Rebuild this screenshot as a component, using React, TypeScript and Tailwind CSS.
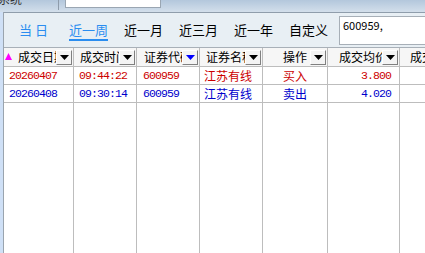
import React from "react";

const CJK = "font-['Noto_Sans_CJK_SC',sans-serif]";

const ranges = ["当 日", "近一周", "近一月", "近三月", "近一年", "自定义"];

type Col = { title: string; width: string; textPad: string; sort?: boolean; blue?: boolean };

const cols: Col[] = [
  { title: "成交日期", width: "w-[70px]", textPad: "pl-[14px]", sort: true },
  { title: "成交时间", width: "w-[63px]", textPad: "pl-[6px]" },
  { title: "证券代码", width: "w-[63px]", textPad: "pl-[7px]", blue: true },
  { title: "证券名称", width: "w-[63px]", textPad: "pl-[6px]" },
  { title: "操作", width: "w-[65px]", textPad: "pl-[20px]" },
  { title: "成交均价", width: "w-[72px]", textPad: "pl-[11px]" },
  { title: "成交金额", width: "w-[80px]", textPad: "pl-[10px]" },
];

const widths = cols.map((c) => c.width);

const rows = [
  { date: "20260407", time: "09:44:22", code: "600959", name: "江苏有线", side: "买入", price: "3.800", color: "text-[#cc0000]" },
  { date: "20260408", time: "09:30:14", code: "600959", name: "江苏有线", side: "卖出", price: "4.020", color: "text-[#0000cc]" },
];

const mono = "font-['Liberation_Mono',monospace] text-[11.5px] leading-[17px] tracking-[-0.9px]";

function DropButton({ blue }: { blue?: boolean }) {
  return (
    <span className="absolute right-[1px] top-[2px] flex h-[15px] w-[16px] items-center justify-center border border-t-white border-l-white border-r-[#808080] border-b-[#808080] bg-[#f4f4f4]">
      <svg width="9" height="5" viewBox="0 0 9 5">
        <polygon points="0,0 9,0 4.5,5" fill={blue ? "#0000ff" : "#000000"} />
      </svg>
    </span>
  );
}

export default function App() {
  return (
    <div className={`h-[253px] w-[425px] overflow-hidden bg-white ${CJK}`}>
      {/* window strip */}
      <div className="relative flex h-[12px] items-start overflow-hidden bg-gradient-to-b from-[#b3c7dc] to-[#d3dfeb]">
        <span className="mt-[-7px] ml-[-2px] shrink-0 text-[12px] leading-[12px] text-[#333]">系统</span>
        <span className="ml-[36px] h-[10px] w-px shrink-0 bg-[#8e9cab]" />
        <span className="ml-[6px] h-[8px] w-[96px] shrink-0 border border-t-0 border-[#9aa6b2] bg-white" />
      </div>

      <div className="flex h-[241px]">
        <div className="w-[3px] shrink-0 bg-[#cfe0f6]" />
        <div className="flex w-[422px] shrink-0 flex-col overflow-hidden border-l border-[#9aa4ae]">
          {/* range toolbar */}
          <div className="flex h-[36px] shrink-0 items-center overflow-hidden border-t border-b border-t-[#8f9dab] border-b-[#a8b0b8] bg-[#e8eff4] pl-[2px]">
            {ranges.map((r, i) => (
              <div key={r} className="flex w-[55px] shrink-0 justify-center">
                <span
                  className={`relative whitespace-pre text-[13px] leading-[14px] ${
                    i < 2 ? "text-[#2a8df0]" : "text-black"
                  }`}
                >
                  {r}
                  {i === 1 ? (
                    <span className="absolute left-0 right-0 top-[16px] h-[2px] bg-[#2a8df0]" />
                  ) : null}
                </span>
              </div>
            ))}
            <div className="ml-[3px] h-[29px] w-[100px] shrink-0 border border-[#a7afb7] bg-white px-[3px] pt-[2px] text-[11px] leading-[12px] text-black">
              600959,
            </div>
          </div>

          {/* grid */}
          <div className="flex flex-1 flex-col overflow-hidden">
            <div className="flex h-[19px] shrink-0 border-b border-[#bdbdbd] bg-[#f6f6f6]">
              {cols.map((c) => (
                <div
                  key={c.title}
                  className={`relative shrink-0 overflow-hidden border-r border-[#bdbdbd] ${c.width}`}
                >
                  {c.sort ? (
                    <svg className="absolute left-[1px] top-[5px]" width="7" height="7" viewBox="0 0 7 7">
                      <polygon points="3.5,0 7,7 0,7" fill="#ff00ff" />
                    </svg>
                  ) : null}
                  <div className={`whitespace-nowrap text-[12px] leading-[18px] text-black ${c.textPad}`}>
                    {c.title}
                  </div>
                  <DropButton blue={c.blue} />
                </div>
              ))}
            </div>

            {rows.map((r) => (
              <div key={r.date} className={`flex h-[18px] shrink-0 border-b border-[#bdbdbd] ${r.color}`}>
                <div className={`w-[70px] shrink-0 border-r border-[#bdbdbd] pl-[5px] ${mono}`}>{r.date}</div>
                <div className={`w-[63px] shrink-0 border-r border-[#bdbdbd] pl-[5px] ${mono}`}>{r.time}</div>
                <div className={`w-[63px] shrink-0 border-r border-[#bdbdbd] pl-[6px] ${mono}`}>{r.code}</div>
                <div className="w-[63px] shrink-0 border-r border-[#bdbdbd] pl-[4px] text-[12px] leading-[17px]">
                  {r.name}
                </div>
                <div className="w-[65px] shrink-0 border-r border-[#bdbdbd] text-center text-[12px] leading-[17px]">
                  {r.side}
                </div>
                <div className={`w-[72px] shrink-0 border-r border-[#bdbdbd] pr-[8px] text-right ${mono}`}>
                  {r.price}
                </div>
                <div className="w-[80px] shrink-0 border-r border-[#bdbdbd]" />
              </div>
            ))}

            <div className="flex flex-1">
              {widths.map((w, i) => (
                <div key={i} className={`shrink-0 border-r border-[#bdbdbd] ${w}`} />
              ))}
            </div>
          </div>
        </div>
      </div>
    </div>
  );
}
